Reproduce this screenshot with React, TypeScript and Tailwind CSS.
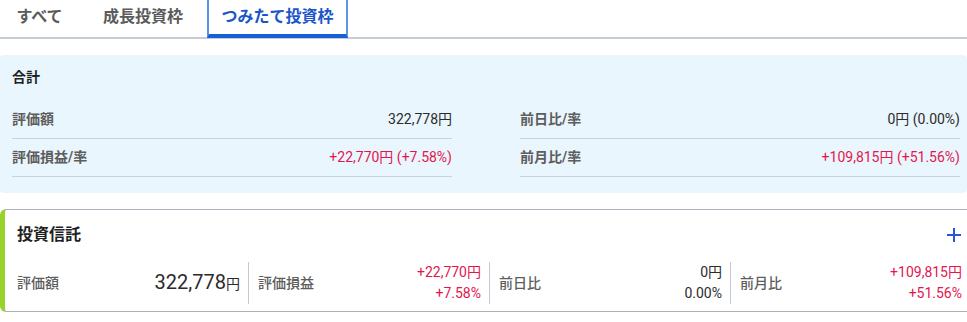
import React from "react";

const font = { fontFamily: 'Roboto, "Noto Sans CJK JP", "Noto Sans", sans-serif' };

function SumRow({ label, value, red }: { label: string; value: React.ReactNode; red?: boolean }) {
  return (
    <div className="flex h-[38px] items-center justify-between border-b border-[#c9d1da]">
      <span className="text-[14px] font-bold text-[#5d5d5d]">{label}</span>
      <span className={`text-[14px] ${red ? "text-[#e3164f]" : "text-[#2b2b2b]"}`}>{value}</span>
    </div>
  );
}

function Metric({
  label,
  children,
  first,
  last,
}: {
  label: string;
  children: React.ReactNode;
  first?: boolean;
  last?: boolean;
}) {
  return (
    <div
      className={`flex h-[42px] items-center justify-between ${first ? "pl-3" : "border-l border-[#c3cad3] pl-[9px]"} ${last ? "pr-3" : "pr-2"}`}
    >
      <span className="text-[14px] font-medium text-[#5d5d5d]">{label}</span>
      <div className="flex flex-col items-end text-[14px] leading-[21px]">{children}</div>
    </div>
  );
}

export default function App() {
  return (
    <div className="w-[967px] h-[322px] overflow-hidden bg-white" style={font}>
      {/* Tabs */}
      <div className="flex h-[39px] border-b-2 border-[#c5ccd6]">
        <div className="flex h-[37px] w-[79px] items-center justify-center pb-1 text-[16px] font-bold text-[#5b5b5b]">
          すべて
        </div>
        <div className="flex h-[37px] w-[128px] items-center justify-center pb-1 text-[16px] font-bold text-[#5b5b5b]">
          成長投資枠
        </div>
        <div className="flex h-[38px] w-[141px] items-center justify-center border-x-2 border-b-4 border-x-[#5d94ea] border-b-[#1560d4] text-[16px] font-bold text-[#1a55c9]">
          つみたて投資枠
        </div>
      </div>

      {/* Summary */}
      <div className="mt-4 rounded-[4px] bg-[#eaf6fd] pl-3 pr-[7px] pt-3 pb-4">
        <div className="flex h-[20px] items-center text-[14px] font-bold text-[#1f1f1f]">合計</div>
        <div className="mt-[14px] grid grid-cols-[440px_440px] gap-x-[68px]">
          <div>
            <SumRow label="評価額" value="322,778円" />
            <SumRow label="評価損益/率" value="+22,770円 (+7.58%)" red />
          </div>
          <div>
            <SumRow label="前日比/率" value="0円 (0.00%)" />
            <SumRow label="前月比/率" value="+109,815円 (+51.56%)" red />
          </div>
        </div>
      </div>

      {/* Card */}
      <div className="mt-4 w-[975px] rounded-[6px] border border-[#a9b2bc] border-l-[5px] border-l-[#97d32b] pb-[7px]">
        <div className="flex h-[24px] mt-[13px] items-center justify-between pl-3 pr-3">
          <span className="text-[16px] font-bold text-[#1f1f1f]">投資信託</span>
          <svg width="16" height="16" viewBox="0 0 16 16">
            <path d="M8 1v14M1 8h14" stroke="#2456d6" strokeWidth="2" fill="none" />
          </svg>
        </div>
        <div className="mt-[15px] grid grid-cols-[243px_241px_241px_1fr]">
          <Metric label="評価額" first>
            <span className="text-[#2b2b2b]">
              <span className="text-[20px]">322,778</span>
              <span className="text-[14px]">円</span>
            </span>
          </Metric>
          <Metric label="評価損益">
            <span className="text-[#e3164f]">+22,770円</span>
            <span className="text-[#e3164f]">+7.58%</span>
          </Metric>
          <Metric label="前日比">
            <span className="text-[#2b2b2b]">0円</span>
            <span className="text-[#2b2b2b]">0.00%</span>
          </Metric>
          <Metric label="前月比" last>
            <span className="text-[#e3164f]">+109,815円</span>
            <span className="text-[#e3164f]">+51.56%</span>
          </Metric>
        </div>
      </div>
    </div>
  );
}
